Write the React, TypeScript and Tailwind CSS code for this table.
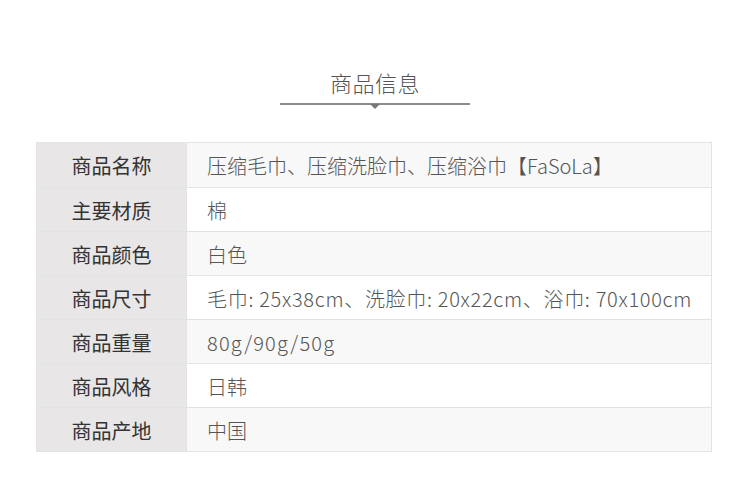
const rows = [
  { label: "商品名称", value: "压缩毛巾、压缩洗脸巾、压缩浴巾【FaSoLa】", track: "" },
  { label: "主要材质", value: "棉", track: "" },
  { label: "商品颜色", value: "白色", track: "" },
  { label: "商品尺寸", value: "毛巾: 25x38cm、洗脸巾: 20x22cm、浴巾: 70x100cm", track: "tracking-[0.7px]" },
  { label: "商品重量", value: "80g/90g/50g", track: "tracking-[1.2px]" },
  { label: "商品风格", value: "日韩", track: "" },
  { label: "商品产地", value: "中国", track: "" },
];

export default function App() {
  return (
    <div
      className="w-[750px] h-[500px] bg-white overflow-hidden"
      style={{ fontFamily: '"Noto Sans CJK SC", "Noto Sans", sans-serif' }}
    >
      {/* title */}
      <div className="flex flex-col items-center pt-[66px]">
        <h2 className="text-[22px] leading-[32px] font-light text-[#555] tracking-[0.5px]">商品信息</h2>
        <div className="relative mt-[5px] w-[190px] h-[2px] bg-[#8c8c8c]">
          <div className="absolute left-1/2 top-[1px] -translate-x-1/2 w-0 h-0 border-l-[5px] border-r-[5px] border-t-[5px] border-l-transparent border-r-transparent border-t-[#777]" />
        </div>
      </div>

      {/* table */}
      <div className="ml-[36px] mt-[37px] w-[676px] border border-[#e3e3e3]">
        {rows.map((row, index) => (
          <div
            key={index}
            className={
              "flex h-[44px] " + (index > 0 ? "border-t border-[#e3e3e3]" : "")
            }
          >
            <div className="w-[150px] shrink-0 flex items-center justify-center pt-[2px] bg-[#e8e6e7] text-[20px] text-[#333] border-r border-[#e3e3e3]">
              {row.label}
            </div>
            <div
              className={
                "flex-1 flex items-center pl-[20px] pt-[2px] text-[20px] font-light text-[#555] whitespace-nowrap " +
                row.track +
                " " +
                (index % 2 === 0 ? "bg-[#f8f8f8]" : "bg-white")
              }
            >
              {row.value}
            </div>
          </div>
        ))}
      </div>
    </div>
  );
}
